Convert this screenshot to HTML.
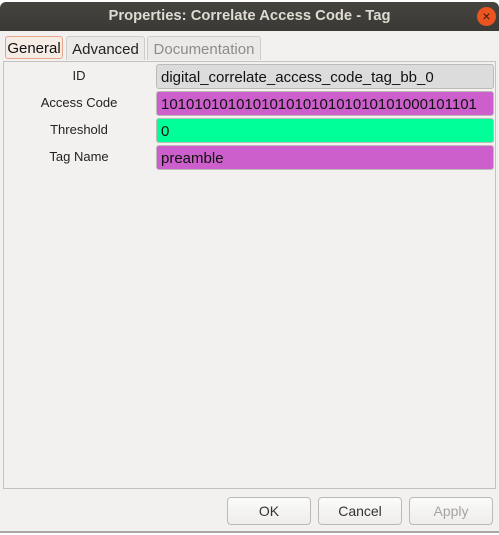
<!DOCTYPE html><html><head><style>
body{margin:0;width:499px;height:535px;background:#fff;font-family:"Liberation Sans","DejaVu Sans",sans-serif;overflow:hidden;position:relative}
.win{position:absolute;left:0;top:2px;width:499px;height:529px;background:#f2f1f0;border-radius:6px 6px 0 0;overflow:hidden;border-bottom:2px solid #a8a7a4}
.title{height:29px;background:linear-gradient(#45443f,#3a3935);color:#dfdbd2;font-weight:bold;font-size:14.8px;text-align:center;line-height:29px}
.close{position:absolute;left:477px;top:5px;width:19px;height:19px;border-radius:50%;background:#e95420;color:#3a1a0a;font-size:14px;line-height:19px;text-align:center}
.tab{position:absolute;top:34px;height:24px;border:1px solid #cfcdc9;border-bottom:none;border-radius:3px 3px 0 0;font-size:15px;line-height:26px;color:#222;background:#eceae8;text-align:center;box-sizing:border-box}
.panel{position:absolute;left:3px;top:59px;width:491px;height:426px;border:1px solid #c5c3bf;background:#f2f1f0}
.lbl{position:absolute;width:150px;text-align:center;font-size:13px;color:#222}
.f{position:absolute;left:156px;border:1px solid #bdbbb7;border-radius:3px;font-size:15px;line-height:25px;padding-left:4px;box-sizing:border-box;width:338px;height:25px;color:#111}
.btn{position:absolute;top:495px;height:26px;width:82px;border:1px solid #bcbab6;border-radius:4px;background:linear-gradient(#fbfbfa,#eeedeb);font-size:14px;text-align:center;line-height:26px;color:#333}
</style></head><body>
<div class="win">
<div class="title">Properties: Correlate Access Code - Tag</div>
<div class="close">×</div>
<div class="tab" style="left:5px;top:34px;width:58px;border:1px solid #e8a58a;background:#f6ece6;color:#111;height:23px;line-height:24px;border-radius:3px">General</div>
<div class="tab" style="left:66px;width:79px">Advanced</div>
<div class="tab" style="left:147px;width:114px;color:#8e8c88">Documentation</div>
<div class="panel"></div>
<div class="lbl" style="left:4px;top:66px">ID</div>
<div class="lbl" style="left:4px;top:93px">Access Code</div>
<div class="lbl" style="left:4px;top:120px">Threshold</div>
<div class="lbl" style="left:4px;top:147px">Tag Name</div>
<div class="f" style="top:62px;background:#dcdcdc">digital_correlate_access_code_tag_bb_0</div>
<div class="f" style="top:89px;background:#cc5fcc">10101010101010101010101010101000101101</div>
<div class="f" style="top:116px;background:#00ff99">0</div>
<div class="f" style="top:143px;background:#cc5fcc">preamble</div>
<div class="btn" style="left:227px">OK</div>
<div class="btn" style="left:318px">Cancel</div>
<div class="btn" style="left:409px;color:#a5a3a0">Apply</div>
</div>
</body></html>
